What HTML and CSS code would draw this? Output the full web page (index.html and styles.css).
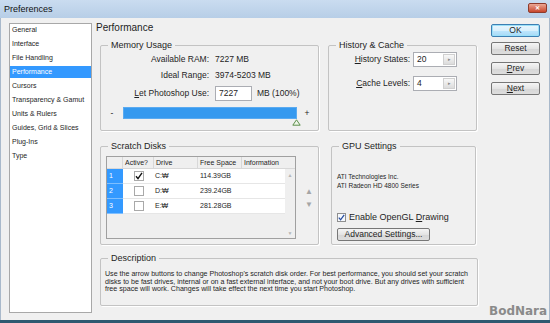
FILE: index.html
```html
<!DOCTYPE html>
<html lang="en">
<head>
    <meta charset="UTF-8">
    <title>Preferences</title>
    <link rel="stylesheet" href="styles.css">
</head>
<body>
    <div class="window">
        <div class="titlebar">
            <span class="title">Preferences</span>
            <span class="close">&#10005;</span>
        </div>
        <div class="content">
            <ul class="sidebar">
                <li>General</li>
                <li>Interface</li>
                <li>File Handling</li>
                <li class="selected">Performance</li>
                <li>Cursors</li>
                <li>Transparency &amp; Gamut</li>
                <li>Units &amp; Rulers</li>
                <li>Guides, Grid &amp; Slices</li>
                <li>Plug-Ins</li>
                <li>Type</li>
            </ul>

            <div class="main">
                <div class="heading">Performance</div>

                <div class="row row-top">
                    <div class="group memory">
                        <div class="group-title">Memory Usage</div>
                        <div class="field">
                            <span class="label">Available RAM:</span>
                            <span class="value">7227 MB</span>
                        </div>
                        <div class="field">
                            <span class="label">Ideal Range:</span>
                            <span class="value">3974-5203 MB</span>
                        </div>
                        <div class="field use">
                            <span class="label"><u>L</u>et Photoshop Use:</span>
                            <span class="use-value">
                                <span class="textbox">7227</span>
                                <span class="unit">MB (100%)</span>
                            </span>
                        </div>
                        <div class="slider">
                            <span class="minus">-</span>
                            <span class="bar">
                                <svg class="thumb" width="9" height="7" viewBox="0 0 9 7">
                                    <path d="M4.5 0.8 L8.2 6.2 L0.8 6.2 Z" fill="#eef6e8" stroke="#5c8f4c" stroke-width="1"/>
                                </svg>
                            </span>
                            <span class="plus">+</span>
                        </div>
                    </div>

                    <div class="group history">
                        <div class="group-title">History &amp; Cache</div>
                        <div class="spin-field">
                            <span class="label"><u>H</u>istory States:</span>
                            <span class="spinbox"><span class="spin-value">20</span><span class="spin-btn">&#9656;</span></span>
                        </div>
                        <div class="spin-field">
                            <span class="label"><u>C</u>ache Levels:</span>
                            <span class="spinbox"><span class="spin-value">4</span><span class="spin-btn">&#9656;</span></span>
                        </div>
                    </div>
                </div>

                <div class="row row-mid">
                    <div class="group scratch">
                        <div class="group-title">Scratch Disks</div>
                        <div class="scratch-body">
                            <div class="disk-table">
                                <div class="thead">
                                    <span class="c-num"></span>
                                    <span class="c-active">Active?</span>
                                    <span class="c-drive">Drive</span>
                                    <span class="c-free">Free Space</span>
                                    <span class="c-info">Information</span>
                                </div>
                                <div class="tbody">
                                    <div class="rows">
                                        <div class="tr">
                                            <span class="c-num">1</span>
                                            <span class="c-active"><span class="check">
                                                <svg width="8" height="8" viewBox="0 0 8 8"><path d="M1 4.2 L3 6.6 L7 0.8" fill="none" stroke="#111" stroke-width="1.4"/></svg>
                                            </span></span>
                                            <span class="c-drive">C:&#8361;</span>
                                            <span class="c-free">114.39GB</span>
                                            <span class="c-info"></span>
                                        </div>
                                        <div class="tr">
                                            <span class="c-num">2</span>
                                            <span class="c-active"><span class="check"></span></span>
                                            <span class="c-drive">D:&#8361;</span>
                                            <span class="c-free">239.24GB</span>
                                            <span class="c-info"></span>
                                        </div>
                                        <div class="tr">
                                            <span class="c-num">3</span>
                                            <span class="c-active"><span class="check"></span></span>
                                            <span class="c-drive">E:&#8361;</span>
                                            <span class="c-free">281.28GB</span>
                                            <span class="c-info"></span>
                                        </div>
                                    </div>
                                    <div class="scrollbar">
                                        <span>&#9650;</span>
                                        <span>&#9660;</span>
                                    </div>
                                </div>
                            </div>
                            <div class="order">
                                <span>&#9650;</span>
                                <span>&#9660;</span>
                            </div>
                        </div>
                    </div>

                    <div class="group gpu">
                        <div class="group-title">GPU Settings</div>
                        <div class="gpu-info">
                            ATI Technologies Inc.<br>
                            ATI Radeon HD 4800 Series
                        </div>
                        <div class="opengl">
                            <span class="checkbox">
                                <svg width="7" height="7" viewBox="0 0 7 7"><path d="M0.8 3.6 L2.6 5.8 L6.2 0.8" fill="none" stroke="#2a4fa0" stroke-width="1.3"/></svg>
                            </span>
                            <span>Enable OpenGL <u>D</u>rawing</span>
                        </div>
                        <div class="button advanced">Advanced Settings...</div>
                    </div>
                </div>

                <div class="group description">
                    <div class="group-title">Description</div>
                    <p class="desc-text">Use the arrow buttons to change Photoshop's scratch disk order. For best performance, you should set your scratch<br>
                    disks to be fast drives, internal or on a fast external interface, and not your boot drive. But any drives with sufficient<br>
                    free space will work. Changes will take effect the next time you start Photoshop.</p>
                </div>
            </div>

            <div class="buttons">
                <div class="button default">OK</div>
                <div class="button">Reset</div>
                <div class="button"><u>P</u>rev</div>
                <div class="button"><u>N</u>ext</div>
                <div class="watermark">BodNara</div>
            </div>
        </div>
    </div>
</body>
</html>
```

FILE: styles.css
```css
body {
    margin: 0;
    font-family: "Liberation Sans", Arial, sans-serif;
    font-size: 8.5px;
    color: #1e1e1e;
}

.window {
    width: 550px;
    height: 323px;
    box-sizing: border-box;
    display: flex;
    flex-direction: column;
    background-color: #f0f0f0;
    border-bottom: 3px solid #2f5870;
    box-shadow: inset 1px 0 0 #a9b9cb, inset -1px 0 0 #a9b9cb;
    overflow: hidden;
}

/* title bar */
.titlebar {
    height: 18px;
    flex-shrink: 0;
    display: flex;
    justify-content: space-between;
    padding: 0 3px 0 4px;
    background: linear-gradient(#cadcf0, #b7cee7);
}

.title {
    font-size: 9px;
    line-height: 18px;
    color: #111;
}

.close {
    width: 17px;
    height: 8px;
    margin-top: 3px;
    border: 1px solid #8e3b2c;
    border-radius: 2px;
    background: linear-gradient(#eba895, #c8462c);
    color: #fff;
    font-size: 6px;
    line-height: 8px;
    text-align: center;
    font-weight: bold;
}

.content {
    flex: 1;
    display: flex;
    padding-top: 5px;
}

/* left list */
.sidebar {
    list-style: none;
    margin: 0 0 0 9px;
    padding: 0 0 0 2px;
    width: 83px;
    height: 290px;
    box-sizing: border-box;
    background-color: #fff;
    border: 1px solid #a8a8a8;
}

.sidebar li {
    height: 12px;
    line-height: 12px;
    margin-bottom: 2px;
    font-size: 7px;
    white-space: nowrap;
}

.sidebar li.selected {
    margin-left: -2px;
    padding-left: 2px;
    background-color: #3399ff;
    color: #fff;
}

/* main area */
.main {
    width: 384px;
    margin-left: 4px;
}

.heading {
    height: 22px;
    font-size: 10px;
    line-height: 10px;
}

.row {
    display: flex;
    padding-left: 4px;
}

.row-mid {
    margin-top: 15px;
}

.group {
    box-sizing: border-box;
    border: 1px solid #c3c3c3;
    border-radius: 2px;
    box-shadow: 1px 1px 0 #fff;
}

.group-title {
    display: table;
    margin: -6px 0 0 7px;
    padding: 0 3px;
    font-size: 9px;
    line-height: 11px;
    background-color: #f0f0f0;
}

/* memory usage */
.memory {
    width: 219px;
    height: 86px;
}

.field {
    display: grid;
    grid-template-columns: 108px auto;
    column-gap: 6px;
    height: 16px;
    line-height: 16px;
    font-size: 8.5px;
}

.field:first-of-type {
    margin-top: 2px;
}

.label {
    text-align: right;
    white-space: nowrap;
}

.field.use {
    margin-top: 3px;
    height: 15px;
    line-height: 15px;
}

.use-value {
    display: flex;
}

.textbox {
    width: 37px;
    height: 15px;
    box-sizing: border-box;
    padding-left: 3px;
    border: 1px solid #abadb3;
    background-color: #fff;
    line-height: 13px;
}

.unit {
    margin-left: 5px;
}

.slider {
    display: flex;
    align-items: center;
    height: 12px;
    margin-top: 6px;
}

.minus {
    width: 22px;
    text-align: center;
}

.plus {
    width: 20px;
    text-align: center;
}

.bar {
    position: relative;
    width: 174px;
    height: 12px;
    background-color: #3599ef;
    box-shadow: inset 0 0 0 1px #5aaaf0;
}

.thumb {
    position: absolute;
    right: -4px;
    bottom: -7px;
}

/* history & cache */
.history {
    width: 149px;
    height: 86px;
    margin-left: 9px;
}

.spin-field {
    display: grid;
    grid-template-columns: 81px 44px;
    column-gap: 3px;
    height: 15px;
    line-height: 15px;
    margin-top: 1px;
}

.spin-field + .spin-field {
    margin-top: 9px;
}

.spinbox {
    display: flex;
    height: 15px;
    box-sizing: border-box;
    border: 1px solid #abadb3;
    background-color: #fff;
}

.spin-value {
    flex: 1;
    padding-left: 3px;
    line-height: 13px;
}

.spin-btn {
    width: 12px;
    margin: 1px;
    background: linear-gradient(#f8f8f8, #dcdcdc);
    border: 1px solid #d0d0d0;
    box-sizing: border-box;
    color: #888;
    font-size: 5px;
    line-height: 9px;
    text-align: center;
}

/* scratch disks */
.scratch {
    width: 219px;
    height: 99px;
}

.scratch-body {
    display: flex;
    margin-top: 4px;
    padding-left: 5px;
}

.disk-table {
    width: 190px;
    height: 83px;
    box-sizing: border-box;
    display: flex;
    flex-direction: column;
    border: 1px solid #a0a0a0;
    background-color: #efefef;
    font-size: 7px;
}

.thead {
    display: flex;
    height: 12px;
    line-height: 11px;
    border-bottom: 1px solid #d8d8d8;
    box-sizing: border-box;
}

.thead span {
    border-right: 1px solid #d8d8d8;
    padding-left: 2px;
    box-sizing: border-box;
}

.thead .c-info {
    flex: 1;
    border-right: none;
}

.c-num {
    width: 16px;
    flex-shrink: 0;
}

.c-active {
    width: 31px;
    flex-shrink: 0;
}

.c-drive,
.c-free {
    width: 44px;
    flex-shrink: 0;
}

.tbody {
    flex: 1;
    display: flex;
}

.rows {
    flex: 1;
}

.tr {
    display: flex;
    height: 15px;
    line-height: 14px;
    background-color: #fff;
    border-bottom: 1px solid #e6e6e6;
    box-sizing: border-box;
}

.tr .c-num {
    padding-left: 2px;
    box-sizing: border-box;
    background-color: #3399ff;
    color: #fff;
    border-bottom: 1px solid #7fbfff;
    margin-bottom: -1px;
}

.tr .c-active {
    display: flex;
    justify-content: center;
    align-items: center;
}

.tr .c-drive,
.tr .c-free {
    padding-left: 1px;
}

.check {
    width: 10px;
    height: 10px;
    box-sizing: border-box;
    border: 1px solid #a9a9a9;
    background-color: #fff;
    display: flex;
    justify-content: center;
    align-items: center;
}

.scrollbar {
    width: 10px;
    display: flex;
    flex-direction: column;
    justify-content: space-between;
    align-items: center;
    padding: 3px 0 2px;
    color: #b5b5b5;
    font-size: 5px;
}

.order {
    display: flex;
    flex-direction: column;
    justify-content: center;
    align-items: center;
    gap: 4px;
    width: 18px;
    padding-left: 4px;
    color: #a5a5a5;
    font-size: 8px;
}

/* gpu settings */
.gpu {
    width: 145px;
    height: 99px;
    margin-left: 12px;
    padding-left: 5px;
}

.gpu .group-title {
    margin-left: 2px;
}

.gpu-info {
    margin-top: 20px;
    font-size: 6.5px;
    line-height: 9px;
}

.opengl {
    display: flex;
    align-items: center;
    height: 10px;
    margin-top: 22px;
    font-size: 9px;
}

.checkbox {
    width: 9px;
    height: 9px;
    box-sizing: border-box;
    border: 1px solid #8f8f8f;
    background-color: #f6f9fd;
    display: flex;
    justify-content: center;
    align-items: center;
    margin-right: 3px;
}

.button {
    height: 13px;
    box-sizing: border-box;
    border: 1px solid #777;
    border-radius: 2px;
    background: linear-gradient(#f5f5f5, #e4e4e4 50%, #d6d6d6 51%, #dedede);
    text-align: center;
    font-size: 8.5px;
    line-height: 11px;
}

.advanced {
    width: 93px;
    margin-top: 6px;
}

/* description */
.description {
    width: 378px;
    height: 48px;
    margin: 13px 0 0 4px;
}

.desc-text {
    margin: 7px 0 0 4px;
    font-size: 7.1px;
    line-height: 7.5px;
    white-space: nowrap;
}

/* right buttons */
.buttons {
    width: 49px;
    margin-left: 11px;
    display: flex;
    flex-direction: column;
}

.buttons .button {
    margin-top: 7px;
}

.buttons .button.default {
    margin-top: 1px;
    margin-bottom: -2px;
    border-color: #3d7fb3;
    box-shadow: inset 0 0 0 1px #9ae0f8;
    background: linear-gradient(#eaf6fd, #d9f0fc 50%, #bee6fd 51%, #a7d9f5);
}

.watermark {
    margin-top: auto;
    margin-bottom: 2px;
    margin-left: -2px;
    font-family: "DejaVu Sans", sans-serif;
    font-weight: bold;
    font-size: 12px;
    line-height: 14px;
    color: #8a8a8a;
    white-space: nowrap;
}
```
